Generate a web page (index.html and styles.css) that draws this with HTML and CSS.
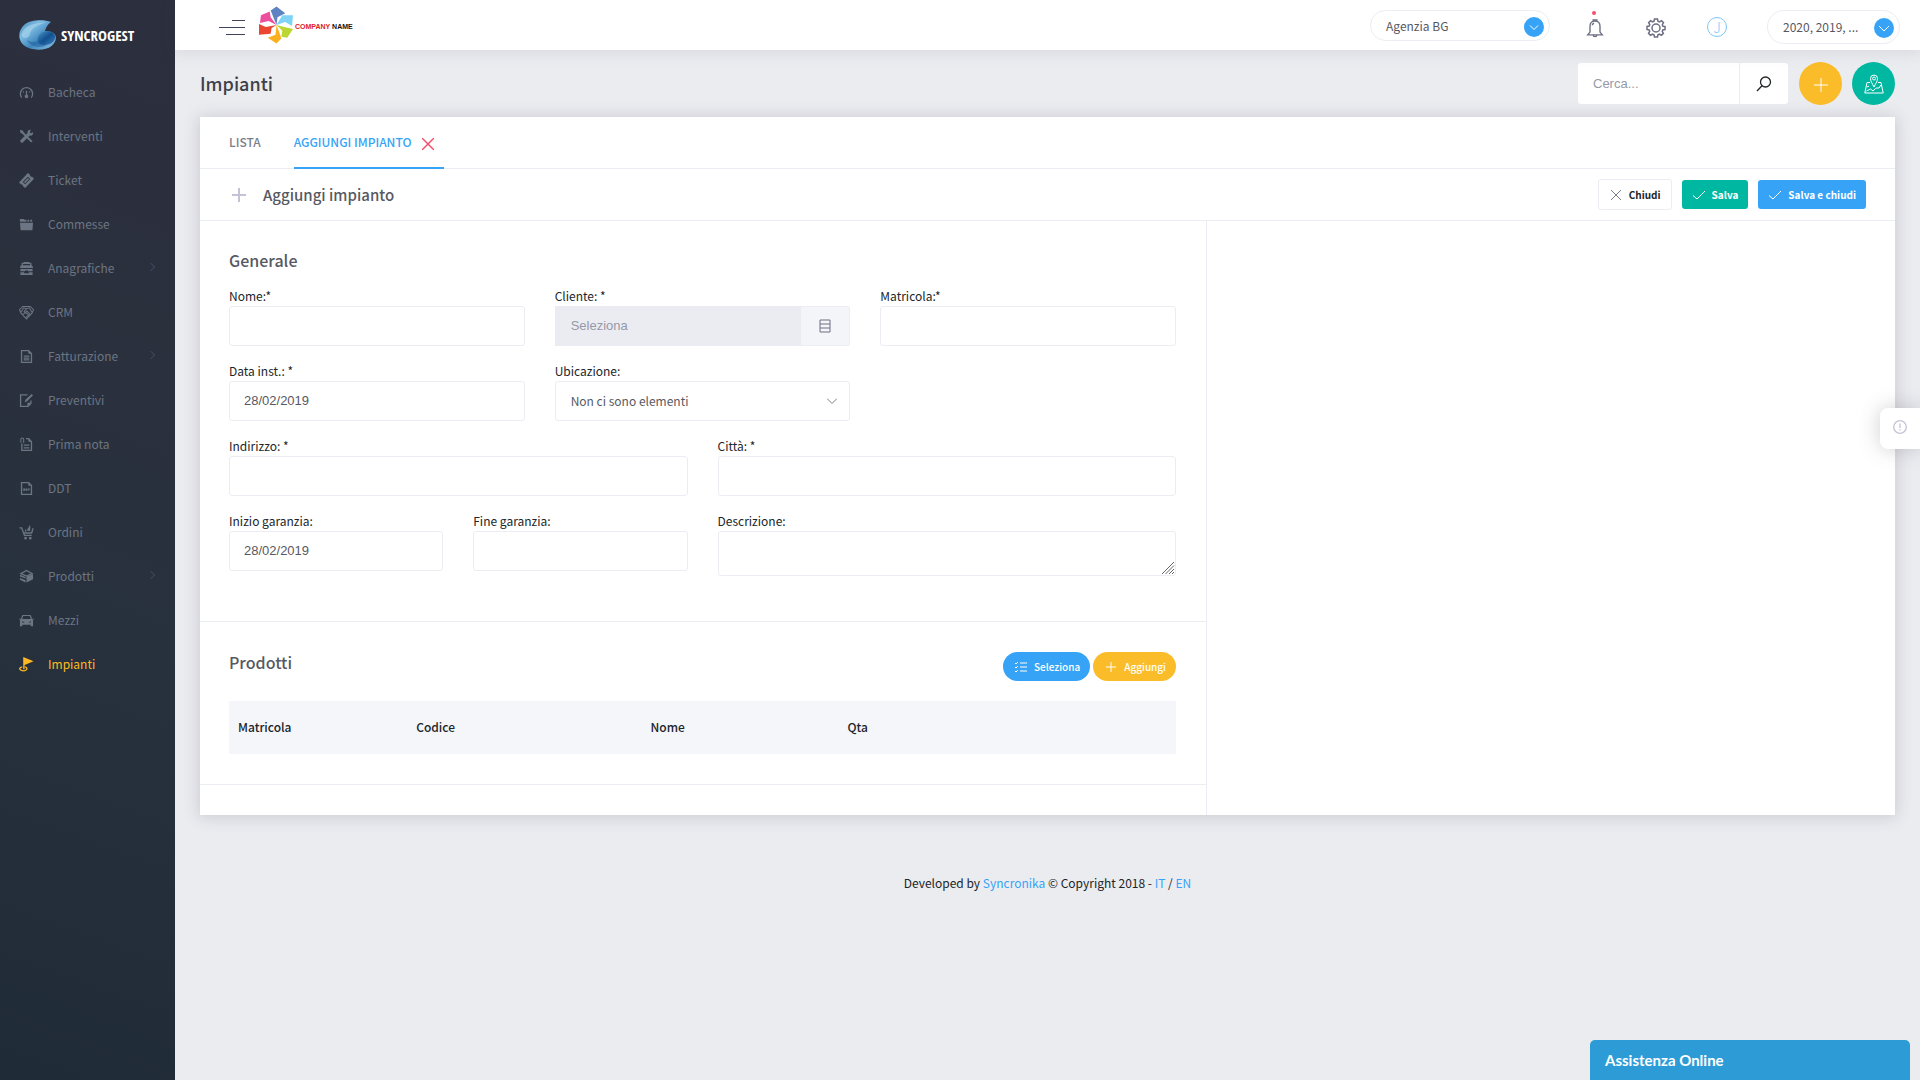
FILE: index.html
```html
<!DOCTYPE html>
<html lang="it">
<head>
<meta charset="utf-8">
<meta name="viewport" content="width=device-width, initial-scale=1">
<title>Syncrogest - Impianti</title>
<link rel="stylesheet" href="styles.css">
</head>
<body>
<aside class="sidebar">
  <a class="brand" href="#">
    <svg class="brand-mark" viewBox="0 0 38 30" aria-hidden="true">
      <defs>
        <linearGradient id="shell" x1="0" y1="0" x2="1" y2="1"><stop offset="0" stop-color="#3a7fb0"/><stop offset=".3" stop-color="#7fbde2"/><stop offset=".6" stop-color="#3f86bd"/><stop offset="1" stop-color="#8fc4e6"/></linearGradient>
        <linearGradient id="core" x1="0" y1="0" x2="1" y2="1"><stop offset="0" stop-color="#4f98cc"/><stop offset=".5" stop-color="#12508f"/><stop offset="1" stop-color="#3a80bd"/></linearGradient>
      </defs>
      <path fill="url(#shell)" d="M32 2C26-.6 12-.8 5.500 4.500-1 10-1.500 20 4.500 25c6 5.500 21 6.500 28 1 5-4 5.500-9.500 2.500-12.500-2-1.700-5-2.500-9-2.500 1-4 3-7 6-9z"/>
      <path fill="url(#core)" d="M20 15c2-3 6-4.500 10-3.500 4 .8 6.500 3 6 6.500-.6 4.500-6 7-11 7-6 0-8-5-5-10z"/>
      <path fill="#1d5f9f" opacity=".55" d="M8 20c4 3 10 2 13 0 1 3 4 5 6 5.500-7 3-17 .5-19-5.500z"/>
      <path fill="#b5dcf2" opacity=".5" d="M3 16C2 9 10 2.500 28 2.500 19 4.500 12 8 11 14c-.6 4-6 6-8 2z"/>
    </svg>
    <span>SYNCROGEST</span>
  </a>
  <nav class="menu">
    <a href="#"><svg viewBox="0 0 16 16"><path class="l" d="M3 13.500A6.500 6.500 0 1 1 13 13.500"/><path d="M7.300 6h1.400v4.500a1.800 1.800 0 1 1-1.400 0zM4 6l1.500 1.500-1 1zM12 6l-1.500 1.500 1 1z"/></svg><span>Bacheca</span></a>
    <a href="#"><svg viewBox="0 0 16 16"><path d="M1 1l3 .5 1 2 9.500 9.500-1.500 1.500L3.500 5l-2-1zM12.500 1l-1 2.500 1 1L15 3.500c.5 2.500-1.500 4-3.500 3.500L4 14.500c-1 1-3.500-1-2.500-2.500L9 4.500C8.500 2.500 10.500.5 12.500 1z"/></svg><span>Interventi</span></a>
    <a href="#"><svg viewBox="0 0 16 16"><path fill-rule="evenodd" d="M9.500 0L11.500 1.500c0 1.500 1 2.500 2.500 2.500L16 6 6.500 16 4.500 14.500c0-1.500-1-2.500-2.500-2.500L0 10zM9.500 4L4 9.500 6.500 12 12 6.500z"/><path d="M9.500 5.200l1.300 1.300-4.300 4.300-1.300-1.300z"/></svg><span>Ticket</span></a>
    <a href="#"><svg viewBox="0 0 16 16"><path d="M1 6h14l-.7 8H1.700zM1 5V2h4l1 1h2v2h1V3h2v2h1V3h2v2z"/></svg><span>Commesse</span></a>
    <a href="#"><svg viewBox="0 0 16 16"><path class="l" d="M3.500 5V2.500h9V5"/><path d="M2 4.500h12l1 3H1zM5 1h6v2H5zM1.500 8.500h13V11H9.500v-1h-3v1h-5zM1.500 12h4v1h5v-1h4v3h-13z"/></svg><span>Anagrafiche</span><i class="arrow"></i></a>
    <a href="#"><svg viewBox="0 0 16 16"><path class="t" d="M4 1.500h8L15.500 5 14 8.500 8 15 2 8.500.5 5zM2 8L5 3l3 1 3-1 3 5M8 4L5.500 7c1 1 2 1 3-.5L12 10M7 13.500l3-2.500M4 10l3-2 4 3"/></svg><span>CRM</span></a>
    <a href="#"><svg viewBox="0 0 16 16"><path class="l" d="M2.700 1.700h7.600l3 3v9.600H2.700z"/><path d="M10 1l4 4h-4zM5 7h6v1.300H5zM5 9h6v1.300H5zM5 11h6v1.300H5z"/></svg><span>Fatturazione</span><i class="arrow"></i></a>
    <a href="#"><svg viewBox="0 0 16 16"><path class="l" d="M9 2H1.700v12.300h8l3-3V8"/><path d="M9 14.500v-4h4zM13.500 1L15 2.500l-6 6-3 1.500 1-3z"/></svg><span>Preventivi</span></a>
    <a href="#"><svg viewBox="0 0 16 16"><path class="l" d="M3 7v7.300h10.300V5l-3-3.300H7.500"/><path class="t" d="M2 6V2.500a1.500 1.500 0 0 1 3 0v4"/><path d="M10 1l4 4h-4zM5 8h6v1.300H5zM5 11h6v1.300H5z"/></svg><span>Prima nota</span></a>
    <a href="#"><svg viewBox="0 0 16 16"><path class="l" d="M2.700 1.700h7.600l3 3v9.600H2.700z"/><path d="M10 1l4 4h-4zM4.500 8h2v2.500h-2zM7 8h2v2.500H7zM9.500 8h2v1h-.5v1.500H10V9h-.5z"/></svg><span>DDT</span></a>
    <a href="#"><svg viewBox="0 0 16 16"><path class="l" d="M.5 3h2.300l3 8h7.700M5 8.500h8.500l1.500-5"/><path d="M11.500 0l.5 1v5H8l2-3zM7 4l1 3H6zM7 12.500a1.500 1.500 0 1 1 0 3 1.500 1.500 0 0 1 0-3zM12 12.500a1.500 1.500 0 1 1 0 3 1.500 1.500 0 0 1 0-3z"/></svg><span>Ordini</span></a>
    <a href="#"><svg viewBox="0 0 16 16"><path class="l" d="M2 5l6-3.500L14 5 8 7.500z"/><path d="M8 8l7-2.500v5.500l-7 3.500zM1 6l6 2.500V10L1 8zM1 9.500l6 2.500v2.500l-6-3z"/></svg><span>Prodotti</span><i class="arrow"></i></a>
    <a href="#"><svg viewBox="0 0 16 16"><path fill-rule="evenodd" d="M3.500 2h9L14 6.500l1 1V14h-2.500v-1.500h-9V14H1V7.500l1-1zM4.500 3.300l-1 3.200h9l-1-3.200zM3.500 8.500v1.500H6zM12.500 8.500v1.500H10z"/><path d="M0 6h2v1H0zM14 6h2v1h-2z"/></svg><span>Mezzi</span></a>
    <a class="active" href="#"><svg viewBox="0 0 16 16"><path d="M4.500 0l11 4.500-9.500 4V13H4.500z"/><path class="l" d="M3.500 10.500C.5 11 0 13 2 14c2 .8 5 .6 6-.5 1-1.200 0-2.500-1.500-3"/></svg><span>Impianti</span></a>
  </nav>
</aside>

<div class="page">
  <header class="topbar">
    <button class="toggler" type="button" aria-label="Menu"><i></i><i></i><i></i></button>
    <a class="company" href="#">
      <svg viewBox="0 0 36 38" aria-hidden="true">
        <path fill="#5f82c3" d="M18 0l9 7-8 4-1 8-6-15z"/>
        <path fill="#7fd4f5" d="M24 9l11 0-1 11-7-4-9 3z"/>
        <path fill="#bcd631" d="M18 19l8 2 9 2-6 9-6-1 1-6z"/>
        <path fill="#fbb11f" d="M18 19l3 8 2 6-5 5-9-6 8-3z"/>
        <path fill="#ea4630" d="M18 19l-5 3-1 6-12 1V18l7 3z"/>
        <path fill="#ec4f9c" d="M18 19l-8-4-9 2L2 9l9-4 1 6z"/>
      </svg>
      <strong>COMPANY <b>NAME</b></strong>
    </a>
    <div class="tools">
      <label class="pill agency"><select aria-label="Agenzia"><option>Agenzia BG</option></select><svg viewBox="0 0 20 20"><path d="M6 8.500l4 4 4-4"/></svg></label>
      <button class="tool bell" type="button" aria-label="Notifiche"><svg viewBox="0 0 20 22"><path d="M2 18.500h16l-2.500-3V9c0-3-1.500-5.500-5.500-5.500S4.500 6 4.500 9v6.500zM8 3.500V2h4v1.500M8 19c0 2 4 2 4 0M7 8c0-1.500 1-2 2-2.200"/></svg></button>
      <button class="tool" type="button" aria-label="Impostazioni"><svg viewBox="0 0 20 20"><path d="M8.500 1h3l.5 2.300 1.500.6 2-1.200 2 2-1.200 2 .6 1.500L19 8.500v3l-2.200.4-.6 1.500 1.200 2-2 2-2-1.200-1.500.6-.4 2.200h-3L8 16.800l-1.500-.6-2 1.200-2-2 1.200-2-.6-1.500L1 11.500v-3l2.200-.4.6-1.500-1.200-2 2-2 2 1.200L8 3.300z"/><circle cx="10" cy="10" r="4"/></svg></button>
      <button class="avatar" type="button" aria-label="Profilo">J</button>
      <button class="pill years" type="button"><span>2020, 2019, ...</span><svg viewBox="0 0 20 20"><path d="M5 8l5 5 5-5"/></svg></button>
    </div>
  </header>

  <main class="content">
    <div class="headline">
      <h1>Impianti</h1>
      <form class="search">
        <input type="search" aria-label="Cerca" placeholder="Cerca...">
        <button type="button" aria-label="Avvia ricerca"><svg viewBox="0 0 16 16"><circle cx="9.500" cy="6" r="5"/><path d="M6 9.800L1 15"/></svg></button>
      </form>
      <button class="round gold" type="button" aria-label="Aggiungi"><svg viewBox="0 0 20 20"><path d="M10 4v14M3 11h14"/></svg></button>
      <button class="round green" type="button" aria-label="Mappa"><svg viewBox="0 0 20 20"><path d="M10 13C8 9 6.500 7 6.500 4.500a3.500 3.500 0 0 1 7 0C13.500 7 12 9 10 13zM6 8.500H3L.8 19h18.400L17 8.500h-3M2.500 17l4-2 2.500 2 3-3 3 0 2-3M3 13l2-1"/><circle cx="10" cy="4.500" r="1.500"/></svg></button>
    </div>

    <section class="card">
      <nav class="tabs">
        <a href="#">LISTA</a>
        <a class="current" href="#">AGGIUNGI IMPIANTO <svg viewBox="0 0 12 12"><path d="M0 0l12 12M12 0L0 12"/></svg></a>
      </nav>
      <div class="card-head">
        <svg class="plus" viewBox="0 0 14 14"><path d="M7 0v14M0 7h14"/></svg>
        <h2>Aggiungi impianto</h2>
        <div class="actions">
          <button class="btn plain" type="button"><svg viewBox="0 0 12 12"><path d="M1 1l10 10M11 1L1 11"/></svg>Chiudi</button>
          <button class="btn save" type="button"><svg viewBox="0 0 12 12"><path d="M0 6.500L4 10l8-8"/></svg>Salva</button>
          <button class="btn blue" type="button"><svg viewBox="0 0 12 12"><path d="M0 6.500L4 10l8-8"/></svg>Salva e chiudi</button>
        </div>
      </div>
      <div class="columns">
        <div class="main-col">
          <form class="panel general">
            <h3>Generale</h3>
            <div class="grid">
              <div class="field w4"><label for="nome">Nome:*</label><input id="nome" type="text"></div>
              <div class="field w4"><label for="cliente">Cliente: *</label>
                <div class="group"><input id="cliente" type="text" placeholder="Seleziona" disabled><button type="button" aria-label="Scegli cliente"><svg viewBox="0 0 12 14"><path d="M1 1h10v12H1zM1 5h10M1 9h10"/></svg></button></div></div>
              <div class="field w4"><label for="matricola">Matricola:*</label><input id="matricola" type="text"></div>
              <div class="field w4"><label for="data">Data inst.: *</label><input id="data" type="text" value="28/02/2019"></div>
              <div class="field w4"><label for="ubicazione">Ubicazione:</label>
                <div class="choice"><select id="ubicazione"><option>Non ci sono elementi</option></select><svg viewBox="0 0 10 10"><path d="M0 2.500l5 5 5-5"/></svg></div></div>
              <div class="field w6 start"><label for="indirizzo">Indirizzo: *</label><input id="indirizzo" type="text"></div>
              <div class="field w6"><label for="citta">Città: *</label><input id="citta" type="text"></div>
              <div class="field w3"><label for="inizio">Inizio garanzia:</label><input id="inizio" type="text" value="28/02/2019"></div>
              <div class="field w3"><label for="fine">Fine garanzia:</label><input id="fine" type="text"></div>
              <div class="field w6"><label for="descrizione">Descrizione:</label>
                <div class="area"><textarea id="descrizione" rows="1"></textarea><svg viewBox="0 0 14 14"><path d="M1 13L13 1M4.500 13L13 4.500M8 13l5-5M11 13l2-2"/></svg></div></div>
            </div>
          </form>
          <div class="panel products">
            <div class="products-head">
              <h3>Prodotti</h3>
              <button class="btn blue pillbtn" type="button"><svg viewBox="0 0 12 12"><path d="M5 2h7M5 6h7M5 10h7M0 2l1 1 2-2M0 6l1 1 2-2M0 10l1 1 2-2"/></svg>Seleziona</button>
              <button class="btn gold pillbtn" type="button"><svg viewBox="0 0 12 12"><path d="M6 1v10M1 6h10"/></svg>Aggiungi</button>
            </div>
            <table>
              <thead><tr><th class="c-serial">Matricola</th><th class="c-code">Codice</th><th class="c-name">Nome</th><th class="c-qty">Qta</th></tr></thead>
            </table>
          </div>
        </div>
        <div class="side-col"></div>
      </div>
    </section>

    <footer class="footer">Developed by <a href="#">Syncronika</a> © Copyright 2018 - <a href="#">IT</a> / <a href="#">EN</a></footer>
  </main>
</div>

<button class="info-tab" type="button" aria-label="Informazioni"><svg viewBox="0 0 14 14"><circle cx="7" cy="7" r="6.300"/><path d="M7 3.500v4.500M7 9.300v1.200"/></svg></button>
<button class="chat" type="button">Assistenza Online</button>
</body>
</html>
```
FILE: styles.css
```css
* { box-sizing: border-box; }
body {
  margin: 0;
  min-height: 100vh;
  display: flex;
  background: #ebecf0;
  color: #212529;
  font: 12px/18px "Noto Sans CJK JP", "Noto Sans CJK SC", "Noto Sans", sans-serif;
}
a { color: #36a3f7; text-decoration: none; }
h1, h2, h3 { margin: 0; font-weight: 500; color: #575962; }
button, input, select, textarea { font: inherit; color: inherit; margin: 0; }
button { cursor: pointer; border: 0; padding: 0; background: none; }
svg { fill: none; stroke: currentColor; display: block; flex: none; }

/* Sidebar */
.sidebar {
  flex: none;
  width: 175px;
  background: linear-gradient(200deg, #2c2f3e 0%, #2b303d 30%, #27313d 60%, #202b38 100%);
}
.brand { display: flex; align-items: center; gap: 4px; height: 70px; padding: 0 0 0 19px; color: #fff; font: 15px/20px "Open Sans Condensed", "Noto Sans CJK JP", sans-serif; }
.brand-mark { width: 38px; height: 30px; stroke: none; }
.menu a { display: flex; align-items: center; height: 44px; padding: 0 20px 0 19px; color: #6b7583; }
.menu svg { width: 15px; height: 15px; margin-right: 14px; fill: currentColor; stroke: none; }
.menu .l { fill: none; stroke: currentColor; stroke-width: 1.400; }
.menu .t { fill: none; stroke: currentColor; stroke-width: 1.100; }
.menu .active { color: #ffb822; }
.arrow { width: 6px; height: 6px; margin: 0 1px 2px auto; border: solid #41455c; border-width: 1px 1px 0 0; transform: rotate(45deg); }

/* Top bar */
.page { flex: 1; min-width: 0; display: flex; flex-direction: column; }
.topbar { position: relative; z-index: 1; display: flex; align-items: center; height: 50px; padding: 0 20px 0 44px; background: #fff; box-shadow: 0 1px 15px 1px rgba(69, 65, 78, .12); }
.toggler { display: flex; flex-direction: column; align-items: flex-end; gap: 6px; width: 26px; margin-top: 5px; }
.toggler i { width: 13px; height: 1px; background: #3f4259; }
.toggler i:nth-child(2) { width: 26px; }
.toggler i:nth-child(3) { width: 19px; }
.company { display: flex; align-items: center; gap: 1px; margin-left: 14px; }
.company svg { width: 35px; height: 38px; stroke: none; }
.company strong { padding-top: 3px; color: #e0202a; font: bold 7px/12px "Liberation Sans", Arial, sans-serif; white-space: nowrap; }
.company b { color: #111; }
.tools { display: flex; align-items: center; margin-left: auto; color: #6c6f83; }
.tool svg { width: 20px; height: 20px; stroke-width: 1.500; }
.pill { display: flex; align-items: center; justify-content: space-between; border: 1px solid #ebedf2; border-radius: 20px; color: #575962; }
.pill svg { width: 20px; height: 20px; border-radius: 50%; background: #36a3f7; color: #fff; pointer-events: none; }
.agency { width: 180px; height: 31px; padding: 3px 5px 0 15px; }
.agency select { flex: 1; appearance: none; border: 0; padding: 0 0 2px; background: none; }
.years { width: 133px; height: 34px; padding: 2px 5px 0 15px; margin-top: 4px; }
.years span { padding-bottom: 3px; }
.tool { display: grid; place-items: center; width: 20px; height: 20px; margin-top: 6px; }
.bell { position: relative; margin: 6px 41px 0 35px; }
.bell::before { content: ""; position: absolute; top: -7px; left: 7px; width: 4px; height: 4px; border-radius: 50%; background: #f4516c; }
.avatar { width: 20px; height: 20px; margin: 4px 40px 0 41px; border: 1px solid #7cc6fa; border-radius: 50%; color: #7cc6fa; font: 14px/18px "Noto Sans CJK JP", sans-serif; font-weight: 300; }

/* Page heading */
.content { padding: 12px 25px 0; }
.headline { display: flex; align-items: center; height: 43px; }
h1 { margin-right: auto; padding-bottom: 2px; color: #3f4047; font-size: 18px; line-height: 28px; }
.search { display: flex; width: 210px; height: 41px; margin-right: 11px; border-radius: 3px; background: #fff; }
.search input { flex: 1; min-width: 0; border: 0; padding: 0 15px; background: none; font: 13px/20px "Liberation Sans", Arial, sans-serif; }
.search button { width: 49px; display: grid; place-items: center; border-left: 1px solid #ebedf2; }
.search svg { width: 16px; height: 16px; stroke-width: 1.300; }
::placeholder { color: #9699a8; opacity: 1; }
.round { display: grid; place-items: center; width: 43px; height: 43px; border-radius: 50%; color: #fff; }
.round + .round { margin-left: 10px; }
.round svg { width: 20px; height: 20px; }
.gold { background: #fbbc2a; }
.green { background: #00b8a2; }

/* Card */
.card { margin-top: 12px; background: #fff; box-shadow: 0 1px 15px 1px rgba(69, 65, 78, .2); }
.tabs { display: flex; gap: 33px; height: 52px; padding: 0 29px; border-bottom: 1px solid #ebedf2; font-weight: 500; line-height: 50px; }
.tabs a { color: #7b7e8a; }
.tabs .current { display: flex; align-items: center; width: 150px; height: 52px; border-bottom: 2px solid #36a3f7; color: #36a3f7; white-space: nowrap; }
.tabs svg { width: 12px; height: 12px; margin: 3px 0 0 11px; color: #f4516c; stroke-width: 1.500; }
.card-head { display: flex; align-items: center; height: 52px; padding: 0 29px 0 32px; border-bottom: 1px solid #ebedf2; }
.plus { width: 14px; height: 14px; margin-right: 17px; color: #c4c3d6; stroke-width: 2; }
h2, h3 { font-size: 16px; line-height: 24px; }
h2 { font-size: 15px; }
.actions { display: flex; align-items: center; gap: 10px; margin-left: auto; }
.btn { display: inline-flex; align-items: center; gap: 7px; height: 29px; padding: 0 10px 0 11px; border-radius: 3px; color: #fff; font-size: 10px; line-height: 16px; font-weight: 700; white-space: nowrap; }
.btn svg { width: 12px; height: 12px; }
.plain { height: 31px; border: 1px solid #ebedf2; color: #212529; }
.plain svg { color: #7b7e8a; }
.save { background: #00b8a2; }
.blue { background: #36a3f7; }
.columns { display: flex; }
.main-col { flex: 0 1 1007px; border-right: 1px solid #ebedf2; padding-bottom: 30px; }
.side-col { flex: 1; }
.panel { padding: 0 30px 0 29px; border-bottom: 1px solid #ebedf2; }
.general { padding-top: 27px; padding-bottom: 50px; }
.grid { display: grid; grid-template-columns: repeat(12, minmax(0, 1fr)); gap: 16px 30px; margin-top: 15px; }
.field { height: 59px; }
.w3 { grid-column: span 3; }
.w4 { grid-column: span 4; }
.w6 { grid-column: span 6; }
.w6.start { grid-column: 1 / span 6; }
.field label { display: block; height: 19px; line-height: 18px; }
.field input, .field select, .field textarea { display: block; width: 100%; height: 40px; padding: 0 14px; border: 1px solid #ebedf2; border-radius: 3px; background: #fff; color: #575962; }
.field input { padding-bottom: 1px; font: 13px/20px "Liberation Sans", Arial, sans-serif; }
.group { display: flex; }
.field .group input { flex: 1; min-width: 0; padding: 0 15px 1px; border-color: #ebecf1; border-radius: 0; background: #ebecf1; }
.group button { display: grid; place-items: center; width: 49px; border: 1px solid #ebedf2; border-left: 0; border-radius: 0 3px 3px 0; background: #f4f5f8; color: #6c6f83; }
.group svg { width: 12px; height: 14px; }
.choice, .area { position: relative; }
.field select { appearance: none; padding: 0 15px; }
.choice svg { position: absolute; right: 13px; top: 15px; width: 10px; height: 10px; color: #7b7e8a; pointer-events: none; }
.field textarea { height: 45px; padding: 12px 14px; resize: none; }
.area svg { position: absolute; right: 1px; bottom: 1px; width: 14px; height: 14px; color: #666; pointer-events: none; }

/* Products */
.products { padding-bottom: 30px; }
.products-head { display: flex; align-items: center; height: 79px; padding-top: 10px; gap: 3px; }
.products-head h3 { margin: 0 auto 10px 0; }
.pillbtn { padding-left: 12px; border-radius: 15px; font-weight: 500; }
table { width: 100%; border-collapse: collapse; table-layout: fixed; background: #f5f6f9; }
th { height: 53px; padding: 0 9px 1px; text-align: left; font-weight: 500; }
.c-serial { width: 19%; }
.c-code { width: 25%; }
.c-name { width: 21%; }
.c-qty { width: 36%; }

.footer { padding: 59px 0 30px; text-align: center; }

/* Floating elements */
.info-tab { position: fixed; right: 0; top: 408px; display: grid; place-items: center; width: 40px; height: 41px; padding-bottom: 3px; border-radius: 8px 0 0 8px; background: #fff; color: #c4c3d6; box-shadow: 0 0 20px rgba(69, 65, 78, .25); }
.info-tab svg { width: 14px; height: 14px; stroke-width: 1.300; }
.chat { position: fixed; right: 10px; bottom: 0; width: 320px; height: 40px; padding: 0 15px 1px; border-radius: 5px 5px 0 0; background: #2d9cd6; color: #fff; font: bold 15px/20px Lato, sans-serif; text-align: left; }
```
